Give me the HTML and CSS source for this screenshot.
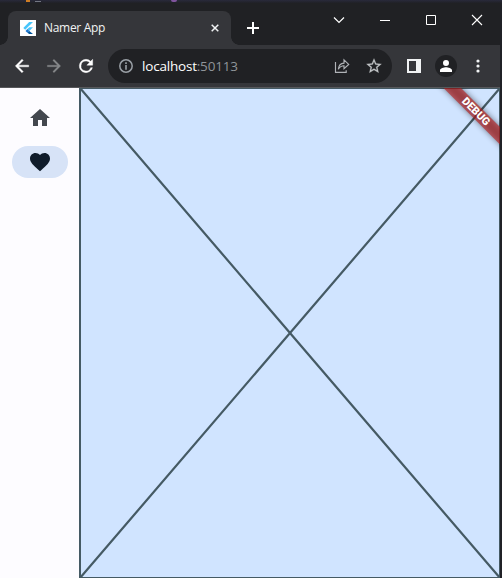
FILE: index.html
```html
<!DOCTYPE html>
<html lang="en">
<head>
<meta charset="utf-8">
<title>Namer App</title>
<link rel="stylesheet" href="styles.css">
</head>
<body>
<div class="desktop">
  <div class="backdrop"><i class="speck orange"></i><i class="speck gray"></i><i class="speck purple"></i></div>
  <div class="window">
    <header class="titlebar">
      <div class="tab">
        <svg class="favicon" width="16" height="16" viewBox="0 0 16 16"><path fill="#fff" d="M0 0h16v16H0z"/><path fill="#47c5fb" d="M9.2 2H13L5.2 9.8 3.3 7.9z"/><path fill="#47c5fb" d="M9.2 7.2H13L9.3 10.9 7.4 9z"/><path fill="#1976d2" d="M5.5 10.9 7.4 9l1.9 1.9-1.9 1.9z"/><path fill="#00569e" d="m7.4 12.8 1.9-1.9L13 14H9.2z"/></svg>
        <span class="tab-title">Namer App</span>
        <svg class="tab-close" width="16" height="16" viewBox="0 0 16 16"><path d="m4.700 4.700 6.600 6.600m0-6.600-6.600 6.600" fill="none" stroke="#f1f3f4" stroke-width="1.500"/></svg>
      </div>
      <svg class="new-tab" width="16" height="16" viewBox="0 0 16 16"><path d="M8 2v12M2 8h12" stroke="#fff" stroke-width="2"/></svg>
      <div class="controls">
        <svg width="46" height="34" viewBox="0 0 46 34"><path d="m18 14.500 5 5 5-5" fill="none" stroke="#fff" stroke-width="1.200"/></svg>
        <svg width="46" height="34" viewBox="0 0 46 34"><path d="M18 17.500h10" stroke="#fff"/></svg>
        <svg width="46" height="34" viewBox="0 0 46 34"><path d="M18.500 12.500h9v9h-9z" fill="none" stroke="#fff"/></svg>
        <svg width="46" height="34" viewBox="0 0 46 34"><path d="m18 12 10 10m0-10L18 22" stroke="#fff" stroke-width="1.100"/></svg>
      </div>
    </header>
    <nav class="toolbar">
      <svg width="20" height="20" viewBox="0 0 24 24"><path fill="#fff" d="M20 11H7.830l5.590-5.590L12 4l-8 8 8 8 1.410-1.410L7.830 13H20z" stroke="#fff" stroke-width=".5"/></svg>
      <svg width="20" height="20" viewBox="0 0 24 24"><path fill="#86888a" d="M4 11h12.170l-5.590-5.590L12 4l8 8-8 8-1.410-1.410L16.170 13H4z" stroke="#86888a" stroke-width=".3"/></svg>
      <svg width="20" height="20" viewBox="0 0 24 24"><path fill="#fff" stroke="#fff" stroke-width=".5" d="M17.650 6.350A7.960 7.960 0 0 0 12 4a8 8 0 1 0 7.730 10h-2.080A6 6 0 1 1 12 6c1.660 0 3.140.69 4.220 1.780L13 11h7V4z"/></svg>
      <div class="address">
        <svg width="16" height="16" viewBox="0 0 16 16"><circle cx="8" cy="8" r="6.200" fill="none" stroke="#9aa0a6" stroke-width="1.500"/><path fill="#9aa0a6" d="M7.200 4.300h1.600v1.600H7.200zM7.200 7h1.600v4.700H7.200z"/></svg>
        <span class="url">localhost<span class="port">:50113</span></span>
        <svg class="share" width="16" height="16" viewBox="0 0 16 16"><path fill="none" stroke="#b0b3b7" stroke-width="1.150" d="M1.500 4v10.400h10.700v-2.100M4.300 11.300c.4-3.700 2.200-6 5.700-6.200V1.900l4.700 4.500L10 10.600V7.700c-2.500 0-4.300 1.200-5.700 3.600z"/></svg>
        <svg class="star" width="18" height="18" viewBox="0 0 24 24"><path fill="#c0c3c6" stroke="#c0c3c6" stroke-width=".3" d="m22 9.240-7.190-.62L12 2 9.190 8.630 2 9.240l5.460 4.730L5.820 21 12 17.270 18.180 21l-1.630-7.030zM12 15.400l-3.760 2.270 1-4.280-3.320-2.880 4.380-.38L12 6.100l1.710 4.040 4.380.38-3.320 2.880 1 4.280z"/></svg>
      </div>
      <svg class="panel" width="14" height="14" viewBox="0 0 14 14"><path fill="#f1f3f4" fill-rule="evenodd" d="M0 0h14v14H0zM2 2v10h7V2z"/></svg>
      <span class="avatar"><svg width="18" height="18" viewBox="0 0 24 24"><path fill="#fff" d="M12 12a4 4 0 1 0 0-8 4 4 0 0 0 0 8zm0 1.500c-2.700 0-8 1.400-8 4.100V20h16v-2.400c0-2.700-5.300-4.100-8-4.100z"/></svg></span>
      <svg class="more" width="4" height="14" viewBox="0 0 4 14"><g fill="#f1f3f4"><circle cx="2" cy="2" r="1.600"/><circle cx="2" cy="7" r="1.600"/><circle cx="2" cy="12" r="1.600"/></g></svg>
    </nav>
    <main class="page">
      <aside class="rail">
        <div class="rail-item"><svg width="24" height="24" viewBox="0 0 24 24"><path fill="#43474e" d="M10 20v-6h4v6h5v-8h3L12 3 2 12h3v8z"/></svg></div>
        <div class="rail-item selected"><svg width="24" height="24" viewBox="0 0 24 24"><path fill="#101c2b" d="m12 21.350-1.450-1.320C5.400 15.360 2 12.280 2 8.500 2 5.420 4.420 3 7.500 3c1.740 0 3.410.81 4.500 2.090C13.090 3.810 14.760 3 16.500 3 19.580 3 22 5.420 22 8.500c0 3.780-3.400 6.860-8.550 11.540z"/></svg></div>
      </aside>
      <section class="content">
        <svg class="placeholder" width="421" height="490" viewBox="79 88 421 490"><path fill="#d0e4ff" stroke="#455a64" stroke-width="2" d="M80 88h420v490H80z"/><path stroke="#455a64" stroke-width="2.200" d="m80 88 420 490M500 88 80 578"/></svg>
        <svg class="banner" width="70" height="70" viewBox="430 88 70 70">
          <defs><filter id="soft" x="-30%" y="-30%" width="160%" height="160%"><feGaussianBlur stdDeviation="3.200"/></filter></defs>
          <path d="M435 79h17l68 68v17z" fill="#000" opacity=".5" filter="url(#soft)"/>
          <path d="M434.500 79h17.500l68 68v17.500z" fill="#b71c1c" fill-opacity=".63"/>
          <text class="banner-text" transform="translate(476.200 111.300) rotate(45)" text-anchor="middle" y="3.800">DEBUG</text>
        </svg>
      </section>
    </main>
  </div>
</div>
</body>
</html>
```
FILE: styles.css
```css
* { box-sizing: border-box; }
body { margin: 0; background: #202124; overflow: hidden; }
svg { display: block; flex: none; }
.desktop { width: 502px; height: 578px; background: #202126; }
.backdrop { display: flex; height: 3px; background: linear-gradient(#292a3b, #202126); }
.speck { height: 2px; }
.orange { width: 4px; margin-left: 26px; background: #ce7d24; }
.gray { width: 6px; height: 1px; margin: 1px 0 0 5px; background: #737783; }
.purple { width: 6px; margin-left: 130px; background: #80549d; border-radius: 0 0 3px 3px; }
.window { width: 500px; height: 575px; display: flex; flex-direction: column; background: #202124; }
.titlebar { height: 42px; display: flex; align-items: flex-start; }
.tab {
  position: relative;
  width: 223px; height: 34px; margin: 8px 0 0 8px; padding: 0 8px 0 12px;
  display: flex; align-items: center; background: #35363a;
  border-radius: 8px 8px 0 0;
}
.tab::before, .tab::after { content: ""; position: absolute; bottom: 0; width: 8px; height: 8px; }
.tab::before { left: -8px; background: radial-gradient(circle at 0 0, transparent 7.500px, #35363a 8px); }
.tab::after { right: -8px; background: radial-gradient(circle at 100% 0, transparent 7.500px, #35363a 8px); }
.tab-title { margin-left: 8px; font: 12px/16px "Open Sans", "Noto Sans", sans-serif; letter-spacing: -.3px; color: #f1f3f4; }
.tab-close { margin-left: auto; }
.new-tab { margin: 17px 0 0 14px; }
.controls { display: flex; margin-left: auto; }
.toolbar { height: 42px; flex: none; display: flex; align-items: center; gap: 12px; padding-left: 12px; background: #35363a; }
.address { width: 284px; height: 34px; display: flex; align-items: center; padding: 0 9px 0 10px; border-radius: 17px; background: #202124; }
.url { margin-left: 8px; color: #fff; font: 13.500px/18px "Open Sans", "Noto Sans", sans-serif; letter-spacing: -.2px; }
.port { color: #8f9499; }
.share { margin-left: auto; }
.star { margin-left: 15px; }
.panel { margin-left: 3px; }
.avatar { width: 22px; height: 22px; margin-left: 2px; display: grid; place-items: center; border-radius: 50%; background: #202124; }
.more { margin-left: 7px; }
.page { flex: 1; display: flex; min-height: 0; border-top: 1px solid #57585b; background: #fdfcff; }
.rail { width: 79px; display: flex; flex-direction: column; gap: 12px; padding: 14px 11px 0 12px; }
.rail-item { width: 56px; height: 32px; display: grid; place-items: center; border-radius: 16px; }
.selected { background: #d7e3f7; }
.content { position: relative; width: 421px; }
.banner { position: absolute; top: 0; right: 0; overflow: hidden; }
.banner-text { font: 900 10.800px Roboto, sans-serif; fill: #fff; }
```
